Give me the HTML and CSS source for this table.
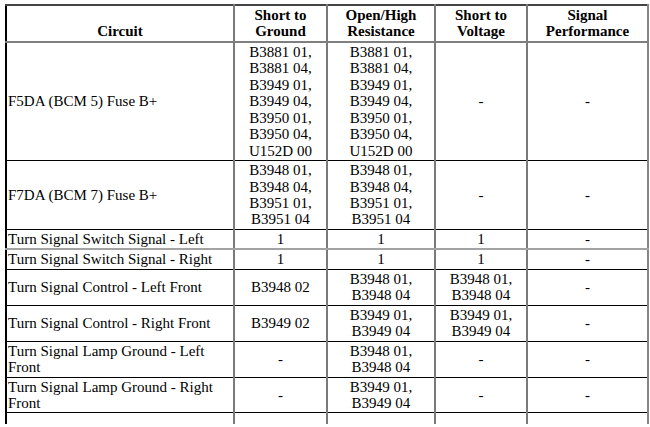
FILE: index.html
```html
<!DOCTYPE html>
<html>
<head>
<meta charset="utf-8">
<link rel="stylesheet" href="styles.css">
</head>
<body>
<div class="frame">
<table class="dtc">
  <colgroup>
    <col class="w-circuit">
    <col class="w-gnd">
    <col class="w-open">
    <col class="w-volt">
    <col class="w-perf">
  </colgroup>
  <thead>
    <tr>
      <th>Circuit</th>
      <th>Short to Ground</th>
      <th>Open/High Resistance</th>
      <th>Short to Voltage</th>
      <th>Signal Performance</th>
    </tr>
  </thead>
  <tbody>
    <tr>
      <td>F5DA (BCM 5) Fuse B+</td>
      <td>B3881 01, B3881 04, B3949 01, B3949 04, B3950 01, B3950 04, U152D 00</td>
      <td>B3881 01, B3881 04, B3949 01, B3949 04, B3950 01, B3950 04, U152D 00</td>
      <td>-</td>
      <td>-</td>
    </tr>
    <tr>
      <td>F7DA (BCM 7) Fuse B+</td>
      <td>B3948 01, B3948 04, B3951 01, B3951 04</td>
      <td>B3948 01, B3948 04, B3951 01, B3951 04</td>
      <td>-</td>
      <td>-</td>
    </tr>
    <tr class="soft">
      <td>Turn Signal Switch Signal - Left</td>
      <td>1</td>
      <td>1</td>
      <td>1</td>
      <td>-</td>
    </tr>
    <tr>
      <td>Turn Signal Switch Signal - Right</td>
      <td>1</td>
      <td>1</td>
      <td>1</td>
      <td>-</td>
    </tr>
    <tr>
      <td>Turn Signal Control - Left Front</td>
      <td>B3948 02</td>
      <td>B3948 01, B3948 04</td>
      <td>B3948 01, B3948 04</td>
      <td>-</td>
    </tr>
    <tr>
      <td>Turn Signal Control - Right Front</td>
      <td>B3949 02</td>
      <td>B3949 01, B3949 04</td>
      <td>B3949 01, B3949 04</td>
      <td>-</td>
    </tr>
    <tr>
      <td>Turn Signal Lamp Ground - Left Front</td>
      <td>-</td>
      <td>B3948 01, B3948 04</td>
      <td>-</td>
      <td>-</td>
    </tr>
    <tr>
      <td>Turn Signal Lamp Ground - Right Front</td>
      <td>-</td>
      <td>B3949 01, B3949 04</td>
      <td>-</td>
      <td>-</td>
    </tr>
    <tr class="tail">
      <td></td>
      <td></td>
      <td></td>
      <td></td>
      <td></td>
    </tr>
  </tbody>
</table>
</div>
</body>
</html>
```

FILE: styles.css
```css
html, body {
  margin: 0;
  padding: 0;
  background: #ffffff;
  overflow: hidden;
}

body {
  padding: 4px 0 0 5px;
}

.frame {
  height: 420px;
  overflow: hidden;
}

.dtc {
  border-collapse: collapse;
  table-layout: fixed;
  width: 642px;
  font-family: "Liberation Serif", "Times New Roman", serif;
  font-size: 15px;
  line-height: 16.45px;
  color: #000;
}

.w-circuit { width: 228px; }
.w-gnd { width: 93px; }
.w-open { width: 108px; }
.w-volt { width: 92px; }
.w-perf { width: 121px; }

.dtc th,
.dtc td {
  padding: 1px 1px;
  border-left: 2px solid #7a7a7a;
  border-right: 2px solid #7a7a7a;
  border-bottom: 1px solid #000;
  text-align: center;
  vertical-align: middle;
}

.dtc th {
  font-weight: bold;
  vertical-align: bottom;
  border-top: 2px solid #444;
  border-bottom: 2px solid #7f7f7f;
}

.dtc td:first-child {
  text-align: left;
}

.dtc th:first-child,
.dtc td:first-child {
  border-left: 2px solid #000;
}

.dtc th:last-child,
.dtc td:last-child {
  border-right: 2px solid #858585;
}

.dtc tr.soft td {
  border-bottom: 2px solid #a3a3a3;
}

.dtc tr.tail td {
  height: 30px;
  border-bottom: none;
}
```
